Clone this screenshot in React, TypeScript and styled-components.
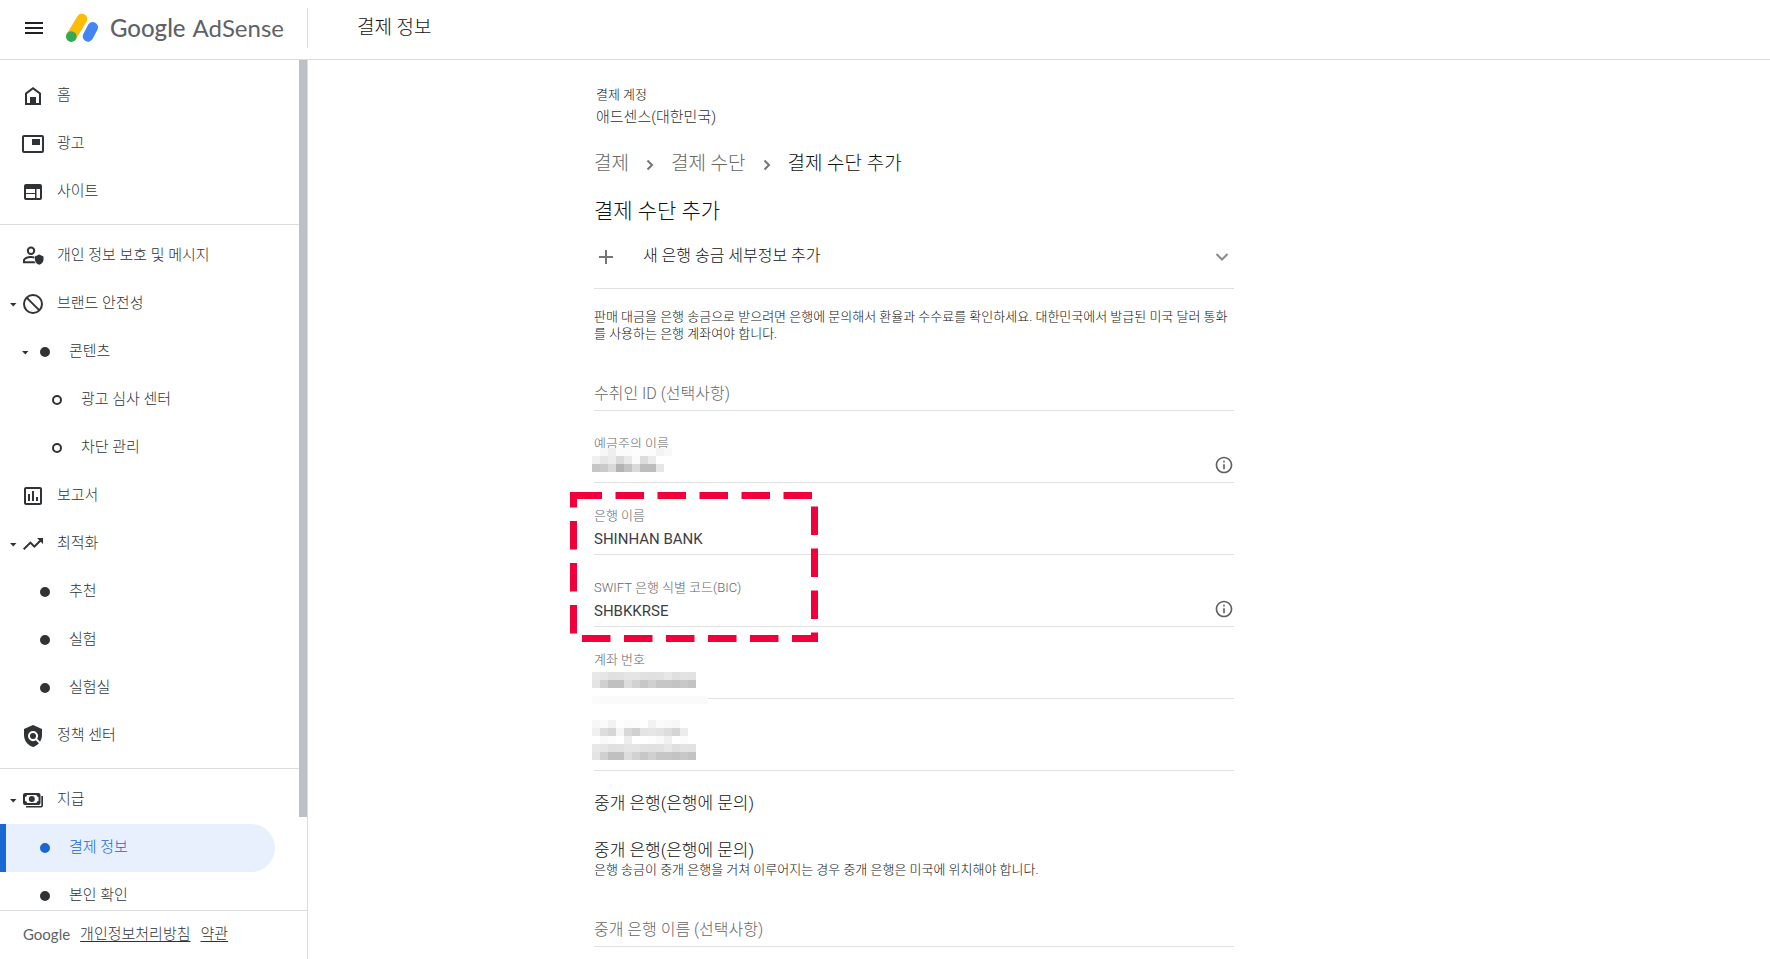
import React from 'react';
import styled, { createGlobalStyle } from 'styled-components';
import { MdMenu, MdOutlineInfo, MdOutlinePoll, MdPolicy, MdTrendingUp } from 'react-icons/md';

const GlobalStyle = createGlobalStyle`
  *, *::before, *::after { box-sizing: border-box; }
  body {
    margin: 0;
    background: #fff;
    color: #111;
    font-family: Roboto, "Noto Sans CJK KR", sans-serif;
    font-weight: 300;
  }
  h1, h2, h3, p, ul, ol { margin: 0; padding: 0; font-weight: inherit; list-style: none; }
  a { color: inherit; text-decoration: none; }
  button, input { font: inherit; color: inherit; border: 0; padding: 0; margin: 0; background: none; }
  svg { display: block; flex: none; }
`;

/* ---------- page frame ---------- */

const Page = styled.div`
  display: flex;
  flex-direction: column;
  height: 100vh;
  overflow: hidden;
`;

const Header = styled.header`
  flex: none;
  display: flex;
  align-items: center;
  height: 60px;
  padding-bottom: 3px;
  border-bottom: 1px solid #dadce0;
`;

const Brand = styled.div`
  display: flex;
  align-items: center;
  width: 308px;
  height: 40px;
  padding-left: 22px;
  border-right: 1px solid #dadce0;
`;

const MenuButton = styled.button`
  width: 24px;
  height: 24px;
  font-size: 24px;
  color: #202124;
`;

const LogoLink = styled.a`
  display: flex;
  align-items: center;
  gap: 11px;
  margin-left: 19px;
`;

const Wordmark = styled.span<{ $size: number }>`
  display: flex;
  gap: 7px;
  font-family: Lato, sans-serif;
  font-size: ${(p) => p.$size}px;
  line-height: 32px;
  font-weight: 400;
  color: #5f6368;
`;

const WordmarkStrong = styled.span`
  font-weight: 500;
`;

const PageTitle = styled.h1`
  padding-left: 49px;
  font-size: 19px;
  line-height: 28px;
`;

const Body = styled.div`
  flex: 1;
  min-height: 0;
  display: flex;
`;

/* ---------- sidebar ---------- */

const Sidebar = styled.aside`
  flex: none;
  width: 308px;
  display: flex;
  flex-direction: column;
  border-right: 1px solid #dadce0;
  color: #303336;
  font-size: 15px;
`;

const NavViewport = styled.div`
  flex: 1;
  min-height: 0;
  display: flex;
`;

const Nav = styled.nav`
  flex: 1;
  overflow: hidden;
  padding-top: 12px;
`;

const ScrollTrack = styled.div`
  width: 8px;
`;

const ScrollThumb = styled.div`
  height: 89%;
  background: #bdc1c6;
`;

const NavGroup = styled.ul`
  & + & {
    margin-top: 8px;
    padding-top: 7px;
    border-top: 1px solid #dadce0;
  }
`;

const NavLink = styled.a<{ $level: number; $active?: boolean }>`
  display: flex;
  align-items: center;
  height: 48px;
  margin-right: 24px;
  padding-left: ${(p) => 5 + p.$level * 12 - (p.$active ? 6 : 0)}px;
  border-radius: 0 24px 24px 0;
  border-left: ${(p) => (p.$active ? '6px solid #1967d2' : '0')};
  background: ${(p) => (p.$active ? '#e8f0fe' : 'transparent')};
  color: ${(p) => (p.$active ? '#1967d2' : 'inherit')};
`;

const ArrowSlot = styled.span`
  width: 16px;
  height: 16px;
`;

const IconSlot = styled.span`
  display: flex;
  align-items: center;
  justify-content: center;
  width: 24px;
  height: 24px;
  font-size: 24px;
`;

const Dot = styled.span<{ $hollow?: boolean }>`
  width: 10px;
  height: 10px;
  border-radius: 50%;
  border: ${(p) => (p.$hollow ? '2px' : '5px')} solid currentColor;
`;

const NavLabel = styled.span`
  padding: 0 0 2px 12px;
  line-height: 20px;
  white-space: nowrap;
`;

const SidebarFooter = styled.footer`
  flex: none;
  display: flex;
  align-items: center;
  gap: 10px;
  height: 49px;
  padding: 0 0 2px 23px;
  border-top: 1px solid #dadce0;
`;

const FooterLink = styled.a`
  line-height: 20px;
  text-decoration: underline;
  text-underline-offset: 2px;
`;

/* ---------- content ---------- */

const Main = styled.main`
  flex: 1;
  min-width: 0;
  overflow: hidden;
  display: grid;
  grid-template-columns: minmax(32px, 286fr) minmax(0, 640px) minmax(32px, 536fr);
  align-items: start;
`;

const Column = styled.div`
  grid-column: 2;
  padding-top: 25px;
`;

const Account = styled.div`
  padding-left: 2px;
`;

const AccountLabel = styled.p`
  font-size: 13px;
  line-height: 20px;
`;

const AccountName = styled.p`
  font-size: 15px;
  line-height: 24px;
  color: #303336;
`;

const Breadcrumbs = styled.ol`
  display: flex;
  align-items: center;
  margin-top: 21px;
  font-size: 19px;
  line-height: 28px;
`;

const Crumb = styled.li<{ $current?: boolean }>`
  display: flex;
  align-items: center;
  color: ${(p) => (p.$current ? 'inherit' : '#666')};
`;

const CrumbArrow = styled.svg`
  margin: 2px 12px 0;
`;

const Heading = styled.h2`
  margin-top: 19px;
  font-size: 21px;
  line-height: 28px;
`;

const MethodButton = styled.button`
  display: flex;
  align-items: center;
  width: 100%;
  height: 64px;
  padding: 0 4px 2px 4px;
  border-bottom: 1px solid #e0e0e0;
  text-align: left;
  color: #757575;
`;

const MethodLabel = styled.span`
  flex: 1;
  padding: 1px 0 0 28px;
  font-size: 16px;
  line-height: 24px;
  color: #111;
`;

const Note = styled.p`
  padding-top: 19px;
  font-size: 13px;
  line-height: 17px;
`;

const FieldBox = styled.div<{ $empty?: boolean }>`
  position: relative;
  display: flex;
  flex-direction: column;
  justify-content: flex-end;
  height: 72px;
  padding-bottom: ${(p) => (p.$empty ? 4 : 2)}px;
  border-bottom: 1px solid #e0e0e0;
`;

const FieldLabel = styled.label`
  font-size: 13px;
  line-height: 20px;
  color: #666;
`;

const FieldRow = styled.div`
  display: flex;
  align-items: center;
  height: 26px;
`;

const FieldInput = styled.input`
  flex: 1;
  min-width: 0;
  height: 24px;
  font-size: 16px;
  outline: none;
  &::placeholder {
    color: #666;
    opacity: 1;
  }
`;

const ValueInput = styled(FieldInput)`
  font-size: 15px;
  font-weight: 400;
  color: #3c4043;
`;

const HelpButton = styled.button`
  width: 20px;
  height: 20px;
  margin-bottom: 4px;
  font-size: 20px;
  color: #616161;
`;

const Intro = styled.div`
  height: 122px;
  display: flex;
  flex-direction: column;
`;

const Highlighted = styled.div`
  position: relative;
`;

const HighlightFrame = styled.svg`
  position: absolute;
  left: -24px;
  top: 9px;
  pointer-events: none;
`;

const MosaicSvg = styled.svg<{ $top: number }>`
  position: absolute;
  left: -2px;
  top: ${(p) => p.$top}px;
`;

const SectionTitle = styled.h3`
  font-size: 17px;
  line-height: 24px;
`;

const Section = styled.section`
  display: flex;
  flex-direction: column;
  gap: 23px;
  padding-top: 20px;
`;

const SectionText = styled.p`
  font-size: 13px;
  line-height: 16px;
`;

const LastField = styled.div`
  margin-top: -3px;
`;

/* ---------- drawings ---------- */

const Logo = () => (
  <svg width="34" height="32" viewBox="65 10 34 32" aria-hidden="true">
    <g strokeWidth="10.6" strokeLinecap="round">
      <path d="M71.6 34L82 17" stroke="#fbbc04" />
      <path d="M88 34.4L92.7 25.4" stroke="#4285f4" />
    </g>
    <circle cx="71.3" cy="34.6" r="5.3" fill="#34a853" />
  </svg>
);

const HomeIcon = () => (
  <svg width="24" height="24" fill="currentColor" aria-hidden="true">
    <path fillRule="evenodd" d="M4 21V9l8-6 8 6v12zM6 19h12v-9l-6-4.5L6 10z" />
    <path d="M9 13h6v6H9z" />
  </svg>
);

const AdsIcon = () => (
  <svg width="24" height="24" fill="currentColor" aria-hidden="true">
    <path
      fillRule="evenodd"
      d="M3 3h18a2 2 0 0 1 2 2v14a2 2 0 0 1-2 2H3a2 2 0 0 1-2-2V5a2 2 0 0 1 2-2zm0 2v14h18V5z"
    />
    <path d="M11 7h8v6h-8z" />
  </svg>
);

const SiteIcon = () => (
  <svg width="24" height="24" fill="currentColor" aria-hidden="true">
    <path
      fillRule="evenodd"
      d="M5 4h14a2 2 0 0 1 2 2v12a2 2 0 0 1-2 2H5a2 2 0 0 1-2-2V6a2 2 0 0 1 2-2zM5 9v4h9V9zM5 14v4h9v-4zM15.500 9v9H19V9z"
    />
  </svg>
);

const BlockIcon = () => (
  <svg width="24" height="24" fill="none" stroke="currentColor" strokeWidth="2" aria-hidden="true">
    <circle cx="12" cy="12" r="9" />
    <path d="M5.600 5.600l12.800 12.800" />
  </svg>
);

const PrivacyIcon = () => (
  <svg width="24" height="24" fill="currentColor" aria-hidden="true">
    <path
      fillRule="evenodd"
      d="M10 2.500a4.200 4.200 0 1 0 0 8.400 4.200 4.200 0 0 0 0-8.400zm0 2a2.200 2.200 0 1 1 0 4.400 2.200 2.200 0 0 1 0-4.400z"
    />
    <path
      fillRule="evenodd"
      d="M2 19.200v-2.700c0-3.200 5-4.500 8-4.500 1.100 0 2.300.2 3.400.5v2c-1-.3-2.200-.5-3.400-.5-2.800 0-6 1.300-6 2.500v.7h9.400c.3.800.7 1.400 1.200 2z"
    />
    <path d="M18.200 10.500l4.300 1.900v3.200c0 2.300-1.700 4.500-4.300 5.200-2.600-.7-4.300-2.900-4.300-5.200v-3.200z" />
  </svg>
);

const MoneyIcon = () => (
  <svg width="24" height="24" fill="currentColor" aria-hidden="true">
    <path
      fillRule="evenodd"
      d="M4 5h13.500a2 2 0 0 1 2 2v8a2 2 0 0 1-2 2H4a2 2 0 0 1-2-2V7a2 2 0 0 1 2-2zm2 2a2 2 0 0 1-2 2v4a2 2 0 0 1 2 2h9.500a2 2 0 0 1 2-2V9a2 2 0 0 1-2-2z"
    />
    <circle cx="10.800" cy="11" r="3" />
    <path d="M20.300 8H22v9.500a2 2 0 0 1-2 2H5V18h15.300z" />
  </svg>
);

const DropArrow = () => (
  <svg width="16" height="16" fill="currentColor" aria-hidden="true">
    <path d="M5 7h6.500l-3.250 3.500z" />
  </svg>
);

const Chevron = () => (
  <CrumbArrow width="18" height="18" fill="none" stroke="#757575" strokeWidth="2" aria-hidden="true">
    <path d="M6.500 4.500L11 9l-4.500 4.500" />
  </CrumbArrow>
);

const PlusIcon = () => (
  <svg width="17" height="16" fill="none" stroke="currentColor" strokeWidth="2" aria-hidden="true">
    <path d="M8 2v14M1 9h14" />
  </svg>
);

const ExpandIcon = () => (
  <svg width="16" height="16" fill="none" stroke="#8a8a8a" strokeWidth="2" aria-hidden="true">
    <path d="M2.500 6L8 11.500 13.500 6" />
  </svg>
);

const CELL = 8;

/* Pixelated cover for private values; each row is a list of two-digit grey levels. */
const Mosaic = ({ rows, top }: { rows: string[]; top: number }) => (
  <MosaicSvg $top={top} width={116} height={rows.length * CELL} shapeRendering="crispEdges" aria-hidden="true">
    {rows.map((row, y) =>
      row
        .split(' ')
        .filter(Boolean)
        .map((g, x) => (
          <rect key={`${x}-${y}`} x={x * CELL} y={y * CELL} width={CELL} height={CELL} fill={`#${g}${g}${g}`} />
        )),
    )}
  </MosaicSvg>
);

const NAME_ROWS = [
  'ff f7 ee fb fb fd fd fc f3 f8',
  'f0 e6 ec da e9 fb dc eb ff',
  'c6 ca d9 b3 c3 da bd bd e6',
];
const NUMBER_ROWS = [
  'e8 e6 e0 e1 e5 e5 e1 e0 e1 e7 df e3 e2',
  'e4 d0 c0 c0 dd d2 c7 d0 c6 c6 c3 c8 c3',
];
const ACCOUNT_ROWS = [...NUMBER_ROWS, '', 'fb fa fa fa fa fa fa fa fa fa fa fa fa fa fa'];
const CONFIRM_ROWS = [
  'f7 fb f2 fe fb fc ff f2 fb f9 f7 ff ff',
  'f0 dd d6 f5 d8 d0 e4 e6 e3 dd d5 ec ff',
  'ff f9 fc ff ed ff ff fd f9 f0 ff fc ff',
  ...NUMBER_ROWS,
];

/* ---------- data ---------- */

type Item = {
  label: string;
  level: number;
  icon: React.ReactNode;
  open?: boolean;
  active?: boolean;
};

const dot = <Dot />;
const ring = <Dot $hollow />;

const groups: Item[][] = [
  [
    { label: '홈', level: 0, icon: <HomeIcon /> },
    { label: '광고', level: 0, icon: <AdsIcon /> },
    { label: '사이트', level: 0, icon: <SiteIcon /> },
  ],
  [
    { label: '개인 정보 보호 및 메시지', level: 0, icon: <PrivacyIcon /> },
    { label: '브랜드 안전성', level: 0, icon: <BlockIcon />, open: true },
    { label: '콘텐츠', level: 1, icon: dot, open: true },
    { label: '광고 심사 센터', level: 2, icon: ring },
    { label: '차단 관리', level: 2, icon: ring },
    { label: '보고서', level: 0, icon: <MdOutlinePoll /> },
    { label: '최적화', level: 0, icon: <MdTrendingUp />, open: true },
    { label: '추천', level: 1, icon: dot },
    { label: '실험', level: 1, icon: dot },
    { label: '실험실', level: 1, icon: dot },
    { label: '정책 센터', level: 0, icon: <MdPolicy /> },
  ],
  [
    { label: '지급', level: 0, icon: <MoneyIcon />, open: true },
    { label: '결제 정보', level: 1, icon: dot, active: true },
    { label: '본인 확인', level: 1, icon: dot },
  ],
];

type FieldProps = {
  id: string;
  label: string;
  value?: string;
  help?: boolean;
  children?: React.ReactNode;
};

const Field = ({ id, label, value = '', help, children }: FieldProps) => (
  <FieldBox>
    <FieldLabel htmlFor={id}>{label}</FieldLabel>
    <FieldRow>
      <ValueInput id={id} type="text" defaultValue={value} />
      {help && (
        <HelpButton type="button" aria-label={`${label} 도움말`}>
          <MdOutlineInfo />
        </HelpButton>
      )}
    </FieldRow>
    {children}
  </FieldBox>
);

/* A field whose label is hidden behind the pixelated cover. */
const CoveredField = ({ label, children }: { label: string; children: React.ReactNode }) => (
  <FieldBox>
    <FieldRow>
      <ValueInput type="text" aria-label={label} />
    </FieldRow>
    {children}
  </FieldBox>
);

const EmptyField = ({ label }: { label: string }) => (
  <FieldBox $empty>
    <FieldRow>
      <FieldInput type="text" placeholder={label} aria-label={label} />
    </FieldRow>
  </FieldBox>
);

export default function App() {
  return (
    <>
      <GlobalStyle />
      <Page>
        <Header>
          <Brand>
            <MenuButton type="button" aria-label="메뉴">
              <MdMenu />
            </MenuButton>
            <LogoLink href="#home">
              <Logo />
              <Wordmark $size={24}>
                <WordmarkStrong>Google</WordmarkStrong>
                <span>AdSense</span>
              </Wordmark>
            </LogoLink>
          </Brand>
          <PageTitle>결제 정보</PageTitle>
        </Header>

        <Body>
          <Sidebar>
            <NavViewport>
              <Nav>
                {groups.map((items, i) => (
                  <NavGroup key={i}>
                    {items.map((item) => (
                      <li key={item.label}>
                        <NavLink
                          href="#nav"
                          $level={item.level}
                          $active={item.active}
                          aria-current={item.active ? 'page' : undefined}
                        >
                          <ArrowSlot>{item.open && <DropArrow />}</ArrowSlot>
                          <IconSlot>{item.icon}</IconSlot>
                          <NavLabel>{item.label}</NavLabel>
                        </NavLink>
                      </li>
                    ))}
                  </NavGroup>
                ))}
              </Nav>
              <ScrollTrack>
                <ScrollThumb />
              </ScrollTrack>
            </NavViewport>
            <SidebarFooter>
              <Wordmark $size={15}>Google</Wordmark>
              <FooterLink href="#privacy">개인정보처리방침</FooterLink>
              <FooterLink href="#terms">약관</FooterLink>
            </SidebarFooter>
          </Sidebar>

          <Main>
            <Column>
              <Account>
                <AccountLabel>결제 계정</AccountLabel>
                <AccountName>애드센스(대한민국)</AccountName>
              </Account>

              <Breadcrumbs>
                <Crumb>
                  <a href="#payments">결제</a>
                  <Chevron />
                </Crumb>
                <Crumb>
                  <a href="#methods">결제 수단</a>
                  <Chevron />
                </Crumb>
                <Crumb $current>결제 수단 추가</Crumb>
              </Breadcrumbs>

              <Heading>결제 수단 추가</Heading>
              <MethodButton type="button">
                <PlusIcon />
                <MethodLabel>새 은행 송금 세부정보 추가</MethodLabel>
                <ExpandIcon />
              </MethodButton>

              <Intro>
                <Note>
                  판매 대금을 은행 송금으로 받으려면 은행에 문의해서 환율과 수수료를 확인하세요. 대한민국에서 발급된
                  미국 달러 통화를 사용하는 은행 계좌여야 합니다.
                </Note>
                <EmptyField label="수취인 ID (선택사항)" />
              </Intro>

              <Field id="holder" label="예금주의 이름" help>
                <Mosaic rows={NAME_ROWS} top={37} />
              </Field>
              <Highlighted>
                <Field id="bank" label="은행 이름" value="SHINHAN BANK" />
                <Field id="bic" label="SWIFT 은행 식별 코드(BIC)" value="SHBKKRSE" help />
                <HighlightFrame width="248" height="150" fill="none" aria-hidden="true">
                  <path
                    d="M3.500 3.500H244.500V146.500H3.500Z"
                    stroke="#f1003c"
                    strokeWidth="7"
                    strokeDasharray="28.500 13.500"
                  />
                </HighlightFrame>
              </Highlighted>
              <Field id="account" label="계좌 번호">
                <Mosaic rows={ACCOUNT_ROWS} top={45} />
              </Field>
              <CoveredField label="계좌 번호 확인">
                <Mosaic rows={CONFIRM_ROWS} top={21} />
              </CoveredField>

              <Section>
                <SectionTitle>중개 은행(은행에 문의)</SectionTitle>
                <div>
                  <SectionTitle>중개 은행(은행에 문의)</SectionTitle>
                  <SectionText>은행 송금이 중개 은행을 거쳐 이루어지는 경우 중개 은행은 미국에 위치해야 합니다.</SectionText>
                </div>
              </Section>
              <LastField>
                <EmptyField label="중개 은행 이름 (선택사항)" />
              </LastField>
            </Column>
          </Main>
        </Body>
      </Page>
    </>
  );
}
